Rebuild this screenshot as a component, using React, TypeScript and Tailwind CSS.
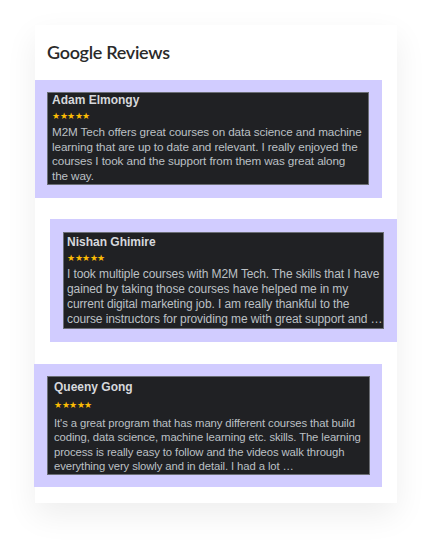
import React from "react";

type Review = {
  name: string;
  lines: string[];
  outer: string;
  inner: string;
  starCls: string;
  body: string;
};

const reviews: Review[] = [
  {
    name: "Adam Elmongy",
    lines: [
      "M2M Tech offers great courses on data science and machine",
      "learning that are up to date and relevant. I really enjoyed the",
      "courses I took and the support from them was great along",
      "the way.",
    ],
    outer: "ml-0 mr-[15px] mt-0 h-[118px] p-[12px] pr-[13px] pb-[13px]",
    inner: "pl-[4px] pt-0",
    starCls: "mt-[3px] mb-[4px]",
    body: "text-[11.7px] leading-[14.7px]",
  },
  {
    name: "Nishan Ghimire",
    lines: [
      "I took multiple courses with M2M Tech. The skills that I have",
      "gained by taking those courses have helped me in my",
      "current digital marketing job. I am really thankful to the",
      "course instructors for providing me with great support and …",
    ],
    outer: "ml-[15px] mt-[21px] h-[123px] p-[13px]",
    inner: "pl-[3px] pt-[2px]",
    starCls: "mt-[3px] mb-[4px]",
    body: "text-[12px] leading-[15px]",
  },
  {
    name: "Queeny Gong",
    lines: [
      "It's a great program that has many different courses that build",
      "coding, data science, machine learning etc. skills. The learning",
      "process is really easy to follow and the videos walk through",
      "everything very slowly and in detail. I had a lot …",
    ],
    outer: "-ml-px mr-[15px] mt-[22px] h-[123px] p-[12px] pl-[13px]",
    inner: "pl-[6px] pt-[3px]",
    starCls: "mt-[5px] mb-[6px]",
    body: "text-[11.3px] leading-[14.3px]",
  },
];

function Card({ r }: { r: Review }) {
  return (
    <div className={`bg-[#d1ccff] ${r.outer}`}>
      <div
        className={`h-full border border-[#6b6e75] bg-[#202124] overflow-hidden ${r.inner}`}
        style={{ fontFamily: '"Liberation Sans", Arial, sans-serif' }}
      >
        <div className="text-[12px] leading-[15px] font-bold text-[#d6d8dc]">{r.name}</div>
        <div className={`text-[9px] leading-[10px] text-[#fbbc04] tracking-[-0.5px] ${r.starCls}`}>★★★★★</div>
        <div className={`tracking-[-0.1px] text-[#bcc0c5] ${r.body}`}>
          {r.lines.map((l) => (
            <div key={l} className="whitespace-nowrap">
              {l}
            </div>
          ))}
        </div>
      </div>
    </div>
  );
}

export default function App() {
  return (
    <div className="w-[432px] h-[547px] bg-white pt-[25px] pl-[35px]">
      <div className="w-[362px] h-[478px] bg-white shadow-[0_12px_30px_rgba(0,0,0,0.07)]">
        <h1
          className="pl-[12px] pt-[15px] h-[55px] text-[18px] leading-[24px] font-semibold text-[#2a2a2a] tracking-[-0.3px]"
          style={{ fontFamily: "Lato, sans-serif" }}
        >
          Google Reviews
        </h1>
        {reviews.map((r) => (
          <Card key={r.name} r={r} />
        ))}
      </div>
    </div>
  );
}
